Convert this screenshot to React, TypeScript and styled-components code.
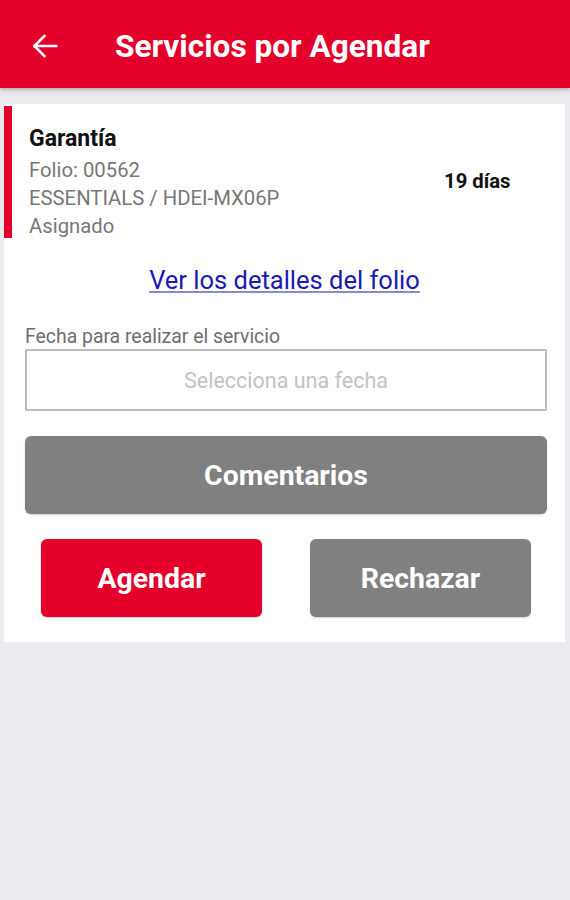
import styled, { createGlobalStyle } from "styled-components";

const GlobalStyle = createGlobalStyle`
  html, body {
    margin: 0;
    padding: 0;
    background-color: #ebebef;
    font-family: Roboto, "Noto Sans", sans-serif;
  }
`;

const Page = styled.div`
  min-height: 900px;
  background-color: #ebebef;
`;

const Header = styled.header`
  height: 88px;
  background-color: #e4002b;
  display: flex;
  align-items: center;
  padding: 4px 0 0 30px;
  box-sizing: border-box;
  box-shadow: 0 2px 4px rgba(0, 0, 0, 0.25);
  color: #fff;
`;

const BackButton = styled.button`
  width: 30px;
  height: 30px;
  padding: 0;
  border: none;
  background: none;
  display: flex;
  align-items: center;
  justify-content: center;
  margin-right: 55px;
`;

const Title = styled.h1`
  margin: 0;
  font-size: 31.6px;
  font-weight: 700;
`;

const Card = styled.section`
  margin: 16px 5px 0 4px;
  background-color: #fff;
  padding: 2px 0 25px;
`;

const ServiceRow = styled.div`
  display: flex;
  align-items: center;
  border-left: 8px solid #e4002b;
  padding: 18px 0 0 17px;
  height: 114px;
`;

const ServiceInfo = styled.div`
  flex: 1;
  display: flex;
  flex-direction: column;
`;

const ServiceName = styled.div`
  font-size: 23px;
  font-weight: 700;
  color: #111;
  line-height: 28px;
  margin-bottom: 3px;
  margin-top: 2px;
`;

const InfoLine = styled.div`
  font-size: 20.3px;
  color: #777;
  line-height: 28px;
`;

const Days = styled.div`
  font-size: 20.3px;
  font-weight: 700;
  color: #111;
  width: 121px;
`;

const DetailsLink = styled.a`
  display: block;
  text-align: center;
  font-size: 25.5px;
  color: #1a1ab0;
  text-decoration: underline;
  text-decoration-color: #8a8ad0;
  margin: 27px 0 0;
  line-height: 30px;
`;

const Body = styled.div`
  padding: 0 18px 0 21px;
  display: flex;
  flex-direction: column;
`;

const FieldLabel = styled.label`
  font-size: 19.4px;
  color: #6e6e6e;
  margin-top: 30px;
  line-height: 24px;
`;

const DateInput = styled.div`
  margin-top: 0;
  height: 58px;
  border: 2px solid #bdbdbd;
  display: flex;
  align-items: center;
  justify-content: center;
  font-size: 21.5px;
  color: #c2c2c2;
`;

const ActionButton = styled.button<{ $variant: "red" | "gray" }>`
  border: none;
  border-radius: 6px;
  background-color: ${(p) => (p.$variant === "red" ? "#e4002b" : "#808080")};
  color: #fff;
  font-family: Roboto, "Noto Sans", sans-serif;
  font-size: 28.4px;
  font-weight: 700;
  height: 78px;
  box-shadow: 0 1px 2px rgba(0, 0, 0, 0.2);
`;

const WideButton = styled(ActionButton)`
  margin-top: 25px;
  width: 100%;
`;

const ButtonRow = styled.div`
  display: flex;
  justify-content: space-between;
  padding: 0 16px;
  margin-top: 25px;
  & > button {
    width: 221px;
  }
`;

const App = () => {
  return (
    <Page>
      <GlobalStyle />
      <Header>
        <BackButton aria-label="Volver">
          <svg width="30" height="30" viewBox="0 0 24 24" fill="none" stroke="#fff" strokeWidth="2" strokeLinecap="square">
            <path d="M21 12H3.5" />
            <path d="M11.5 4L3.5 12L11.5 20" />
          </svg>
        </BackButton>
        <Title>Servicios por Agendar</Title>
      </Header>
      <Card>
        <ServiceRow>
          <ServiceInfo>
            <ServiceName>Garantía</ServiceName>
            <InfoLine>Folio: 00562</InfoLine>
            <InfoLine>ESSENTIALS / HDEI-MX06P</InfoLine>
            <InfoLine>Asignado</InfoLine>
          </ServiceInfo>
          <Days>19 días</Days>
        </ServiceRow>
        <DetailsLink href="#">Ver los detalles del folio</DetailsLink>
        <Body>
          <FieldLabel>Fecha para realizar el servicio</FieldLabel>
          <DateInput>Selecciona una fecha</DateInput>
          <WideButton $variant="gray">Comentarios</WideButton>
          <ButtonRow>
            <ActionButton $variant="red">Agendar</ActionButton>
            <ActionButton $variant="gray">Rechazar</ActionButton>
          </ButtonRow>
        </Body>
      </Card>
    </Page>
  );
};

export default App;
